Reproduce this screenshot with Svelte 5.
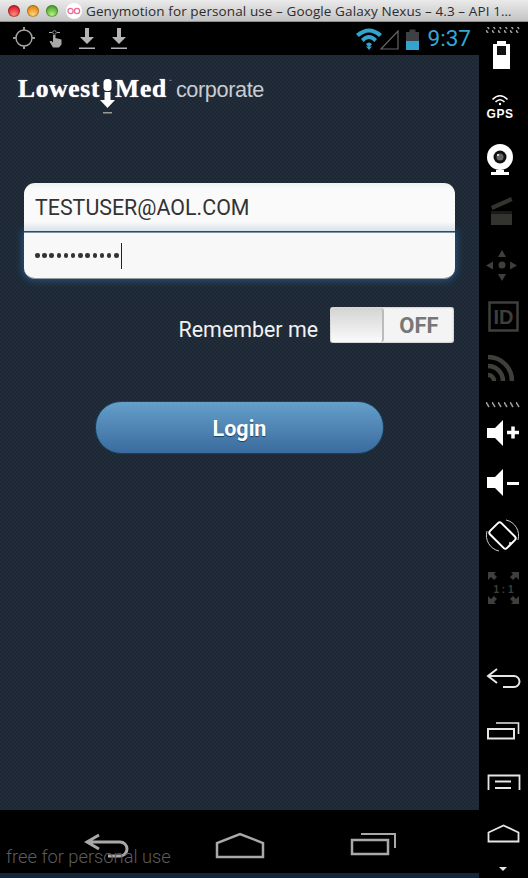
<script>
  const title = 'Genymotion for personal use – Google Galaxy Nexus – 4.3 – API 1…';
</script>

<div class="window">
  <header class="titlebar">
    <span class="light red"></span>
    <span class="light amber"></span>
    <span class="light green"></span>
    <svg class="gm" width="18" height="18" viewBox="0 0 18 18">
      <circle cx="9" cy="9" r="8" fill="#fff"/>
      <circle cx="5.600" cy="9" r="2.600" fill="none" stroke="#ee6a96" stroke-width="1.300"/>
      <circle cx="12" cy="9" r="2.600" fill="none" stroke="#ee6a96" stroke-width="1.300"/>
    </svg>
    <span class="title">{title}</span>
  </header>

  <div class="device">
    <div class="screen">
      <div class="statusbar">
        <svg width="114" height="33" viewBox="0 0 114 33" class="left-icons">
          <g fill="none" stroke="#aaa" stroke-width="1.400">
            <circle cx="10" cy="16" r="8"/>
            <path d="M10 5v3M10 24v3M-1 16h3M18 16h3" stroke="#999" stroke-width="2"/>
          </g>
          <g fill="#a8a8a8">
            <path d="M39 13h2.500v3l6 1.500v5l-2.500 3h-6l-3.500-6 1.800-.8 1.700 1.700z"/>
            <path d="M35 10h3v1h-3zM43 10h3v1h-3z"/>
            <circle cx="40.500" cy="10.500" r="1.800" fill="none" stroke="#a8a8a8" stroke-width=".8"/>
          </g>
          <g fill="#b4b4b4">
            <path d="M71 6h4v9h5l-7 7-7-7h5zM65 25.500h16v1.600H65z"/>
            <path d="M103 6h4v9h5l-7 7-7-7h5zM97 25.500h16v1.600H97z"/>
          </g>
        </svg>
        <div class="right-icons">
          <svg width="70" height="33" viewBox="0 0 70 33">
            <path d="M1 12Q14 1 27 12l-3 3Q14 6 4 15z" fill="#33a3cf"/>
            <path d="M6 17Q14 9 22 17l-2.600 3Q14 14 8.600 20z" fill="#33a3cf"/>
            <path d="M11 22Q14 19 17 22l-3 3.500z" fill="#33a3cf"/>
            <path d="M14 28l-3-3.500h6z" fill="#33a3cf"/>
            <path d="M26 27L43 9v18z" fill="none" stroke="#666" stroke-width="1.200"/>
            <rect x="51" y="10" width="13" height="18" fill="#3d4145"/>
            <rect x="54.500" y="7.500" width="6" height="3" fill="#3d4145"/>
            <rect x="51" y="19" width="13" height="9" fill="#33a3cf"/>
          </svg>
          <span class="clock">9:37</span>
        </div>
      </div>

      <main class="app">
        <div class="logo">
          <span class="brand">Lowest</span>
          <svg class="arrow" width="17" height="36" viewBox="0 0 17 36">
            <rect x="4.500" y="0" width="8" height="12" rx="3.500" fill="#fff"/>
            <path d="M5.500 13h6v8h4.500l-7.500 8-7.500-8h4.500z" fill="#fff"/>
            <rect x="4" y="33" width="9" height="1.500" fill="#999"/>
          </svg>
          <span class="brand">Med</span>
          <span class="tm">™</span>
          <span class="corp">corporate</span>
        </div>

        <div class="form">
          <div class="field first">TESTUSER@AOL.COM</div>
          <div class="field second">
            <span class="dots">{#each Array(12) as _}<i></i>{/each}</span>
            <span class="caret"></span>
          </div>
        </div>

        <div class="remember">
          <span class="label">Remember me</span>
          <div class="toggle">
            <span class="thumb"></span>
            <span class="off">OFF</span>
          </div>
        </div>

        <button class="login">Login</button>
      </main>

      <nav class="navbar">
        <svg width="48" height="32" viewBox="0 0 48 32">
          <path d="M15 3L3 10l12 7M4 10h32a7 7 0 0 1 0 14H24" fill="none" stroke="#a9a9a9" stroke-width="3"/>
        </svg>
        <svg width="50" height="28" viewBox="0 0 50 28">
          <path d="M2 25V11L25 2l23 9v14z" fill="none" stroke="#a9a9a9" stroke-width="2.500"/>
        </svg>
        <svg width="48" height="24" viewBox="0 0 48 24">
          <path d="M13 2h34v14" fill="none" stroke="#a9a9a9" stroke-width="2"/>
          <rect x="4" y="8" width="36" height="14" fill="none" stroke="#a9a9a9" stroke-width="2.500"/>
        </svg>
        <span class="watermark">free for personal use</span>
      </nav>
      <div class="sliver"></div>
    </div>

    <aside class="sidebar">
      <svg width="49" height="856" viewBox="479 22 49 856">
        <defs>
          <pattern id="hatch" width="6" height="6" patternUnits="userSpaceOnUse">
            <path d="M0 0l3 5" stroke="#9b9b9b" stroke-width="1.500"/>
          </pattern>
        </defs>
        <rect x="486" y="27" width="36" height="6" fill="url(#hatch)"/>
        <rect x="486" y="402" width="36" height="6" fill="url(#hatch)"/>

        <!-- battery -->
        <path d="M497 41h9v3h4v25h-17V44h4z" fill="#fff"/>
        <rect x="497" y="46" width="9" height="9" fill="#111"/>

        <!-- gps -->
        <g fill="none" stroke="#fff" stroke-width="1.600">
          <path d="M492.500 99.500Q500 92 507.500 99.500"/>
          <path d="M495.500 102Q500 97.500 504.500 102"/>
        </g>
        <circle cx="500" cy="104" r="1.200" fill="#fff"/>
        <text x="500" y="118" class="gps">GPS</text>

        <!-- webcam -->
        <circle cx="500" cy="157" r="13" fill="#fff"/>
        <circle cx="500" cy="157" r="6.500" fill="#111"/>
        <circle cx="500" cy="157" r="3.500" fill="#666"/>
        <circle cx="498" cy="155" r="1" fill="#fff"/>
        <path d="M496 170h8v2h5v3h-18v-3h5z" fill="#fff"/>

        <!-- clapper -->
        <g fill="#33332f">
          <path d="M491 206l20-9 1.500 4-20 9z"/>
          <rect x="491" y="211" width="21" height="14"/>
          <path d="M491 211h21v3h-21z" fill="#1a1a18"/>
        </g>

        <!-- dpad -->
        <g fill="#3f3f3b">
          <path d="M502 250l4 7h-8zM502 281l-4-7h8zM486 265.500l7-4v8zM517 265.500l-7-4v8z"/>
          <circle cx="502" cy="265" r="3.500"/>
        </g>

        <!-- id -->
        <rect x="489.500" y="302.500" width="28" height="28" fill="none" stroke="#3f3f3b" stroke-width="2.500"/>
        <text x="503.500" y="324" class="id">ID</text>

        <!-- rss -->
        <g fill="none" stroke="#3f3f3b" stroke-width="4.500">
          <path d="M488 357A24 24 0 0 1 512 381"/>
          <path d="M488 366A15 15 0 0 1 503 381"/>
          <path d="M488 375A6 6 0 0 1 494 381"/>
        </g>

        <!-- volume up -->
        <path d="M487 428h8l8-8v26l-8-8h-8z" fill="#fff"/>
        <path d="M507 432.500h12M513 426.500v12" stroke="#fff" stroke-width="3.500" fill="none"/>

        <!-- volume down -->
        <path d="M487 477h8l8-8v27l-8-8h-8z" fill="#fff"/>
        <path d="M507 483.500h12" stroke="#fff" stroke-width="3" fill="none"/>

        <!-- rotate -->
        <rect x="494.500" y="523.500" width="16" height="24" rx="2.500" transform="rotate(-45 502.500 535.500)" fill="none" stroke="#fff" stroke-width="2"/>
        <circle cx="510" cy="543" r="1" fill="#fff"/>
        <g fill="none" stroke="#ccc" stroke-width="1">
          <path d="M506 520A16 16 0 0 1 518 540"/>
          <path d="M499 551A16 16 0 0 1 487 531"/>
        </g>

        <!-- 1:1 -->
        <g fill="#3f3f3b">
          <path d="M488 572h8l-2 2 3 3-3 3-3-3-3 3z"/>
          <path d="M519 572h-8l2 2-3 3 3 3 3-3 3 3z"/>
          <path d="M488 604h8l-2-2 3-3-3-3-3 3-3-3z"/>
          <path d="M519 604h-8l2-2-3-3 3-3 3 3 3-3z"/>
        </g>
        <text x="503.500" y="593" class="ratio">1 : 1</text>

        <!-- hardware buttons -->
        <g fill="none" stroke="#e6e6e6">
          <path d="M497 669l-9 7 9 7M489 676h25a5.500 5.500 0 0 1 0 11h-11" stroke-width="2"/>
          <path d="M496 723h22.500v11" stroke-width="1.600"/>
          <rect x="488" y="729" width="26" height="9.500" stroke-width="2"/>
          <path d="M488.500 790v-14.500h31V790" stroke-width="1.800"/>
          <path d="M495 781.500h16M495 788h16" stroke-width="1.800"/>
          <path d="M488.500 841.500v-9l15-7 15 7v9z" stroke-width="1.800"/>
        </g>
        <path d="M499 867h8l-4 4z" fill="#e6e6e6"/>
      </svg>
    </aside>
  </div>
</div>

<style>
  :global(body) { margin: 0; background: #000; }

  .window {
    width: 528px;
    height: 878px;
    display: flex;
    flex-direction: column;
    overflow: hidden;
    font-family: Roboto, sans-serif;
  }

  .titlebar {
    height: 22px;
    flex: none;
    display: flex;
    align-items: center;
    background: linear-gradient(#eaeaea, #c4c4c4);
    border-bottom: 1px solid #8f8f8f;
    box-sizing: border-box;
    padding-left: 8px;
  }
  .light {
    width: 12px;
    height: 12px;
    border-radius: 50%;
    margin-right: 7px;
    box-shadow: inset 0 0 0 1px rgba(0, 0, 0, .25);
  }
  .red { background: radial-gradient(circle at 50% 80%, #ff8a80, #d8202a 70%); }
  .amber { background: radial-gradient(circle at 50% 80%, #ffd67a, #e08a16 70%); }
  .green { background: radial-gradient(circle at 50% 80%, #b8f08a, #4ea82e 70%); }
  .gm { flex: none; }
  .title {
    margin-left: 3px;
    font: 13.5px "Open Sans", sans-serif;
    letter-spacing: .1px;
    color: #2c2c2c;
    white-space: nowrap;
  }

  .device { flex: 1; display: flex; min-height: 0; }
  .screen { width: 479px; flex: none; display: flex; flex-direction: column; }

  .statusbar {
    height: 33px;
    flex: none;
    background: #000;
    display: flex;
    justify-content: space-between;
    align-items: center;
  }
  .left-icons { margin-left: 14px; overflow: visible; }
  .right-icons { display: flex; align-items: center; margin-right: 8px; }
  .clock { font-size: 22.500px; color: #33a7d6; margin-left: 3px; line-height: 33px; }

  .app {
    height: 755px;
    flex: none;
    box-sizing: border-box;
    display: flex;
    flex-direction: column;
    background-color: #1f2b38;
    background-image: conic-gradient(#222e3c 25%, #1c2733 0 50%, #222e3c 0 75%, #1c2733 0);
    background-size: 4px 4px;
    padding: 0 24px;
  }

  .logo {
    margin-top: 19px;
    height: 36px;
    display: flex;
    align-items: flex-start;
    margin-left: -6px;
    color: #fff;
  }
  .brand {
    font: bold 25.500px/30px "Liberation Serif", serif;
    letter-spacing: .7px;
    text-shadow: 0 0 1px #fff;
  }
  .arrow { margin: 5px -1px 0; }
  .tm { font-size: 5px; line-height: 14px; color: #bbb; margin: 0 4px 0 2px; }
  .corp {
    font: 21.700px/32px "Liberation Sans", sans-serif;
    color: #c8ccd0;
    letter-spacing: -.4px;
  }

  .form {
    margin-top: 73px;
    width: 431px;
  }
  .field {
    box-sizing: border-box;
    background: #f8f8f8;
    display: flex;
    align-items: center;
    padding-left: 11px;
    color: #333;
    font-size: 21.400px;
  }
  .first {
    position: relative;
    z-index: 1;
    height: 49px;
    border-radius: 11px 11px 0 0;
    background: linear-gradient(#f0f0f0, #fafafa 12%, #fafafa 80%, #d8e2ea);
    border-bottom: 1px solid #2f4c66;
  }
  .second {
    height: 47px;
    border-top: 1px solid #7d93a8;
    border-radius: 0 0 11px 11px;
    border-bottom: 1px solid #999;
    box-shadow: 0 0 7px 2px #24527c;
  }
  .dots { display: flex; gap: 2.700px; }
  .dots i { width: 4.500px; height: 4.500px; border-radius: 50%; background: #333; }
  .caret { width: 1px; height: 26px; background: #222; margin-left: 2px; }

  .remember {
    margin-top: 28px;
    width: 430px;
    display: flex;
    justify-content: flex-end;
    align-items: center;
    gap: 12px;
    color: #f2f2f2;
    font-size: 21.400px;
  }
  .label { margin-top: 8px; }
  .toggle {
    width: 124px;
    height: 36px;
    box-sizing: border-box;
    background: #f4f4f4;
    border-radius: 3px;
    display: flex;
    align-items: center;
    box-shadow: inset 0 0 2px #888;
  }
  .thumb {
    width: 53px;
    height: 34px;
    margin-left: 1px;
    box-sizing: border-box;
    background: linear-gradient(#d4d4d4, #fafafa);
    border-right: 2px solid #bbb;
    border-radius: 3px;
  }
  .off {
    flex: 1;
    text-align: center;
    font-weight: bold;
    font-size: 22px;
    color: #777;
  }

  .login {
    margin: 58px 0 0 71px;
    width: 289px;
    height: 53px;
    box-sizing: border-box;
    border-radius: 26px;
    border: 1px solid #12425f;
    background: linear-gradient(#659fca, #3a6b9e);
    color: #fff;
    font: bold 21.500px Roboto, sans-serif;
    text-shadow: 0 1px 1px #1c3f5f;
    padding: 1px 0 0;
  }

  .navbar {
    position: relative;
    height: 63px;
    flex: none;
    background: #000;
    display: grid;
    grid-template-columns: 48px 50px 48px;
    justify-content: start;
    column-gap: 83px;
    padding: 22px 0 0 84px;
    box-sizing: border-box;
  }
  .navbar svg { display: block; }
  .watermark {
    position: absolute;
    left: 6px;
    top: 36px;
    font: 300 18.300px Roboto, sans-serif;
    color: #5c5c5c;
  }
  .sliver { height: 5px; flex: none; background: #12263c; }

  .sidebar { flex: 1; background: #000; }
  .sidebar svg { display: block; }
  .gps { font: bold 12px "Liberation Sans", sans-serif; fill: #fff; text-anchor: middle; letter-spacing: .5px; }
  .id { font: bold 20px "Liberation Sans", sans-serif; fill: #3f3f3b; text-anchor: middle; }
  .ratio { font: bold 10px "Liberation Sans", sans-serif; fill: #3f3f3b; text-anchor: middle; }
</style>
